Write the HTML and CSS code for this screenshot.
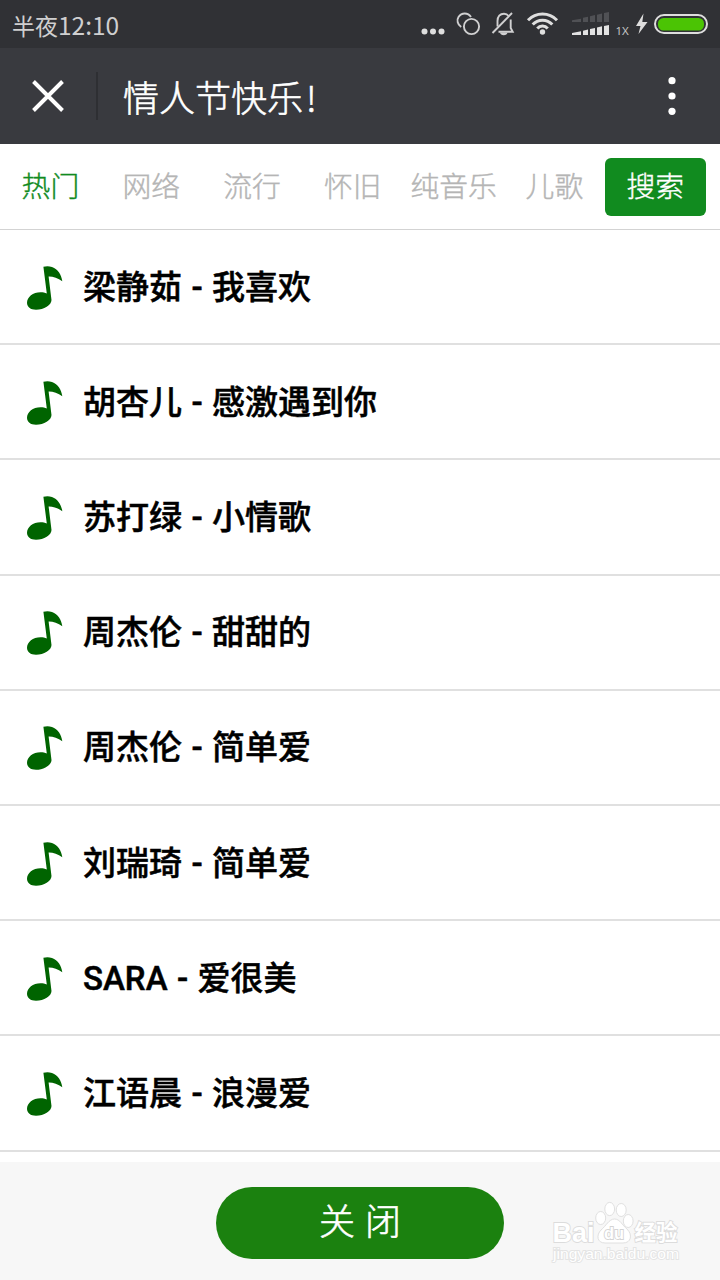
FILE: index.html
```html
<!DOCTYPE html>
<html lang="zh-CN">
<head>
  <meta charset="UTF-8" />
  <title>情人节快乐!</title>
  <meta name="viewport" content="width=device-width, initial-scale=1.0">
  <link rel="stylesheet" href="styles.css">
</head>
<body>
  <!-- Note icon shared by the song rows -->
  <svg class="sprite" width="0" height="0">
    <symbol id="note" viewBox="0 0 36 46">
      <path d="M16.400 1.800 C19 1 22 1 25 1.900 C31 4 34.500 10 35.300 16.200 C31 12.800 26 11.300 21.600 11.400 L24.500 35 C24.500 40 17 44.800 9 44.800 C3.500 44.800 0 42 0 37.800 C0 32 6 27.300 13.500 27.300 C16 27.300 18 27.700 19.800 28.600 Z"/>
    </symbol>
  </svg>

  <!-- Status Bar -->
  <div class="status-bar">
    <span class="clock">半夜<span class="digits">12:10</span></span>
    <svg class="status-icons" width="300" height="48" viewBox="420 0 300 48">
      <g fill="#dedede">
        <circle cx="424.500" cy="31.500" r="3"/>
        <circle cx="433" cy="31.500" r="3"/>
        <circle cx="441.500" cy="31.500" r="3"/>
      </g>
      <g fill="none" stroke="#d0d0d1" stroke-width="1.900">
        <path d="M461.200 27 C457.500 24.500 456.500 20 458.500 17 C461.500 12.300 468 12.300 471 17"/>
        <circle cx="471.500" cy="26.500" r="7.600"/>
        <path d="M497.500 26.500 V21 C497.500 16.500 500 13.700 504 13.700 C506 13.700 507.500 14.500 508.700 16 M510.700 19.500 V28 L512.700 31.800 H498.500"/>
        <path d="M492.500 33 L512 13"/>
      </g>
      <path d="M500 32.500 H507.500 Q507 35.300 503.700 35.300 Q500.500 35.300 500 32.500 Z" fill="#d0d0d1"/>
      <!-- Wifi -->
      <g fill="none" stroke="#dedede" stroke-width="3">
        <path d="M528 20.300 C536 12 549 12 557 20.300"/>
        <path d="M532.700 24.500 C538 18.700 547 18.700 552.300 24.500"/>
        <path d="M537.300 28.500 C540 25.300 545 25.300 547.700 28.500"/>
      </g>
      <circle cx="542.500" cy="32" r="2.700" fill="#dedede"/>
      <!-- Signal -->
      <path d="M572 20.300 L581 18.700 V22 H572 Z M583 17.800 L588 16.700 V22 H583 Z M590 16.200 L595 15 V22 H590 Z M597 14.700 L602 13.500 V22 H597 Z M604 13 L609 12 V22 H604 Z" fill="#505155"/>
      <path d="M572 33 L581 31.200 V35 H572 Z M583 30.800 L588 29.500 V35 H583 Z M590 29 L595 28 V35 H590 Z M597 27.500 L602 26.300 V35 H597 Z M604 26 L609 25 V35 H604 Z" fill="#e2e2e2"/>
      <text class="network" x="615.500" y="35">1X</text>
      <path d="M643.500 13.500 L636 26 H640.500 L638.500 34 L647.500 22 H642.300 Z" fill="#dedede"/>
      <rect x="655" y="15" width="52" height="18" rx="9" fill="none" stroke="#dedede" stroke-width="2"/>
      <rect x="658" y="18" width="46" height="12.500" rx="5.500" fill="#4bc404"/>
    </svg>
  </div>

  <!-- Title Bar -->
  <div class="title-bar">
    <svg class="close-icon" width="32" height="32" viewBox="0 0 32 32">
      <path d="M1.500 1.500 L30.500 30.500 M30.500 1.500 L1.500 30.500" stroke="#fff" stroke-width="3.900"/>
    </svg>
    <span class="divider"></span>
    <span class="title">情人节快乐<span class="mark">!</span></span>
    <svg class="menu-icon" width="8" height="38" viewBox="0 0 8 38" fill="#fff">
      <circle cx="4" cy="3.700" r="3.600"/>
      <circle cx="4" cy="19" r="3.600"/>
      <circle cx="4" cy="34.300" r="3.600"/>
    </svg>
  </div>

  <!-- Category Tabs -->
  <div class="tabs">
    <span class="tab active">热门</span>
    <span class="tab">网络</span>
    <span class="tab">流行</span>
    <span class="tab">怀旧</span>
    <span class="tab">纯音乐</span>
    <span class="tab">儿歌</span>
    <span class="tab search">搜索</span>
  </div>

  <!-- Songs -->
  <ul class="songs">
    <li class="song"><svg class="note"><use href="#note"/></svg><span class="name">梁静茹 - 我喜欢</span></li>
    <li class="song"><svg class="note"><use href="#note"/></svg><span class="name">胡杏儿 - 感激遇到你</span></li>
    <li class="song"><svg class="note"><use href="#note"/></svg><span class="name">苏打绿 - 小情歌</span></li>
    <li class="song"><svg class="note"><use href="#note"/></svg><span class="name">周杰伦 - 甜甜的</span></li>
    <li class="song"><svg class="note"><use href="#note"/></svg><span class="name">周杰伦 - 简单爱</span></li>
    <li class="song"><svg class="note"><use href="#note"/></svg><span class="name">刘瑞琦 - 简单爱</span></li>
    <li class="song"><svg class="note"><use href="#note"/></svg><span class="name">SARA - 爱很美</span></li>
    <li class="song"><svg class="note"><use href="#note"/></svg><span class="name">江语晨 - 浪漫爱</span></li>
  </ul>

  <!-- Footer -->
  <div class="footer">
    <button class="close-btn">关 闭</button>
    <svg class="watermark" width="136" height="66" viewBox="548 1200 136 66">
      <g class="wm-shape">
        <ellipse cx="600.700" cy="1218" rx="5" ry="6.500"/>
        <ellipse cx="609.700" cy="1209" rx="4.900" ry="6.600"/>
        <ellipse cx="621.200" cy="1210" rx="5" ry="6.500"/>
        <ellipse cx="628.200" cy="1221" rx="4.900" ry="6.500"/>
        <path d="M614.500 1219 C620 1219 622 1225 627 1229 C633 1235 631 1243 623 1243 H605 C597 1243 596 1235 601 1230 C606 1226 609 1219 614.500 1219 Z"/>
      </g>
      <text class="wm-text wm-bai" x="552.500" y="1241.500" textLength="42" lengthAdjust="spacingAndGlyphs">Bai</text>
      <text class="wm-text wm-du" x="604" y="1239" textLength="20" lengthAdjust="spacingAndGlyphs">du</text>
      <text class="wm-text wm-cn" x="634.500" y="1240" textLength="43" lengthAdjust="spacingAndGlyphs">经验</text>
      <text class="wm-text wm-url" x="553" y="1259" textLength="126" lengthAdjust="spacingAndGlyphs">jingyan.baidu.com</text>
    </svg>
  </div>
</body>
</html>
```
FILE: styles.css
```css
/* Basic Reset & Font */
* {
  margin: 0;
  padding: 0;
  box-sizing: border-box;
}
body, button {
  font-family: 'Roboto', 'Noto Sans CJK SC', sans-serif;
}
body {
  display: flex;
  flex-direction: column;
  height: 1280px;
  background: #fff;
  color: #000;
  overflow: hidden;
}
.sprite {
  display: none;
}

/* Status Bar */
.status-bar {
  display: flex;
  justify-content: space-between;
  align-items: center;
  flex-shrink: 0;
  height: 48px;
  padding-left: 12px;
  background: #303135;
}
.clock {
  font-family: 'Noto Sans CJK SC', sans-serif;
  font-size: 23px;
  line-height: 48px;
  padding-top: 2px;
  color: #cfcfd0;
}
.digits {
  font-size: 24.5px;
}
.network {
  font-family: 'Noto Sans', sans-serif;
  font-size: 11.5px;
  fill: #c4c4c5;
}

/* Title Bar */
.title-bar {
  display: flex;
  align-items: center;
  flex-shrink: 0;
  height: 96px;
  padding: 0 44px 0 32px;
  background: #393a3f;
}
.divider {
  width: 2px;
  height: 48px;
  margin-left: 32px;
  background: #2e2f33;
}
.title {
  flex: 1;
  margin-left: 25px;
  font-family: 'Noto Sans CJK SC', sans-serif;
  font-size: 36px;
  font-weight: 300;
  line-height: 96px;
  color: #fff;
  -webkit-text-stroke: 0.6px currentColor;
}
.mark {
  margin-left: 3px;
}

/* Category Tabs */
.tabs {
  display: flex;
  align-items: center;
  flex-shrink: 0;
  height: 86px;
  padding-right: 14.4px;
  border-bottom: 1px solid #d3d3d3;
}
.tab {
  flex: 1;
  height: 58px;
  font-family: 'Noto Sans CJK SC', sans-serif;
  font-size: 28.8px;
  font-weight: 300;
  line-height: 54px;
  text-align: center;
  white-space: nowrap;
  color: #b5b5b5;
  -webkit-text-stroke: 0.4px currentColor;
}
.tab.active {
  color: #118b1f;
}
.tab.search {
  border-radius: 6px;
  background: #118b1f;
  color: #fff;
}

/* Songs */
.songs {
  flex: 1;
  list-style: none;
}
.song {
  display: flex;
  align-items: center;
  height: 115.2px;
  padding-left: 27px;
  border-bottom: 2px solid #e0e0e0;
}
.note {
  width: 36px;
  height: 46px;
  margin: 2px 20px 0 0;
  fill: #006400;
}
.name {
  padding-bottom: 4px;
  font-size: 33px;
  font-weight: 500;
  word-spacing: 1.2px;
  -webkit-text-stroke: 0.5px currentColor;
}

/* Footer */
.footer {
  display: grid;
  grid-template-columns: 216px 288px 1fr;
  flex-shrink: 0;
  height: 118px;
  background: #f7f7f7;
}
.close-btn {
  grid-column: 2;
  height: 72px;
  margin-top: 25px;
  border: none;
  border-radius: 36px;
  background: #1b810f;
  font-size: 36px;
  font-weight: 300;
  line-height: 70px;
  word-spacing: 1px;
  color: #fff;
  -webkit-text-stroke: 0.6px currentColor;
}
.watermark {
  margin: 38px 0 0 44px;
}
.wm-shape {
  fill: #fff;
  stroke: #e0e0e0;
  stroke-width: 1;
}
.wm-text {
  fill: #fff;
  stroke: #dcdcdc;
  stroke-width: 1.8;
  paint-order: stroke;
  font-family: 'Liberation Sans', 'Noto Sans CJK SC', sans-serif;
}
.wm-bai {
  font-size: 27px;
  font-weight: 700;
}
.wm-du {
  stroke: #d4d4d4;
  font-size: 17px;
  font-weight: 700;
}
.wm-cn {
  font-size: 22px;
  font-weight: 700;
}
.wm-url {
  stroke: #e4e4e4;
  font-size: 14px;
}
```
